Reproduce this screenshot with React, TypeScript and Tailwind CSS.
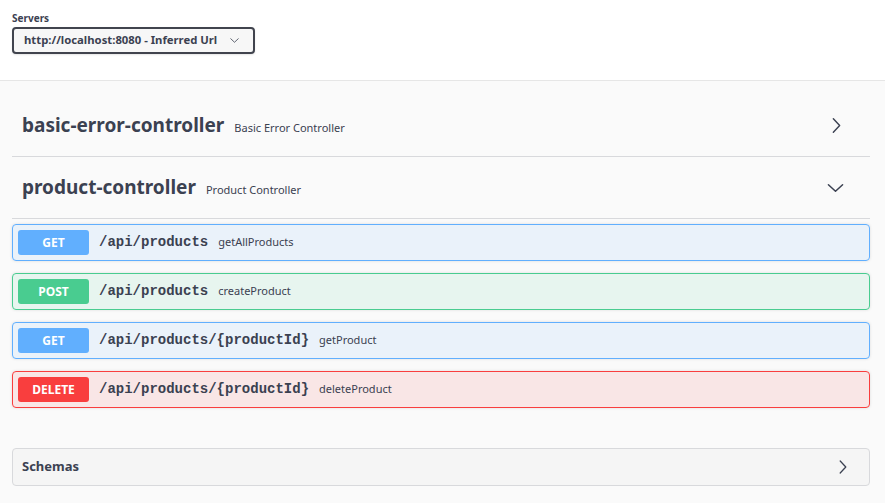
import React from 'react';

type Op = {
  method: 'GET' | 'POST' | 'DELETE';
  path: string;
  summary: string;
};

const ops: Op[] = [
  { method: 'GET', path: '/api/products', summary: 'getAllProducts' },
  { method: 'POST', path: '/api/products', summary: 'createProduct' },
  { method: 'GET', path: '/api/products/{productId}', summary: 'getProduct' },
  { method: 'DELETE', path: '/api/products/{productId}', summary: 'deleteProduct' },
];

const methodStyles: Record<Op['method'], { box: string; badge: string }> = {
  GET: { box: 'border-[#61affe] bg-[#61affe1a]', badge: 'bg-[#61affe]' },
  POST: { box: 'border-[#49cc90] bg-[#49cc901a]', badge: 'bg-[#49cc90]' },
  DELETE: { box: 'border-[#f93e3e] bg-[#f93e3e1a]', badge: 'bg-[#f93e3e]' },
};

const ChevronRight = ({ className = '' }: { className?: string }) => (
  <svg viewBox="0 0 10 18" className={className} fill="none">
    <polyline points="1.5,1.5 8.5,9 1.5,16.5" stroke="#3b4151" strokeWidth="1.6" strokeLinecap="round" strokeLinejoin="round" />
  </svg>
);

const ChevronDown = ({ className = '' }: { className?: string }) => (
  <svg viewBox="0 0 18 10" className={className} fill="none">
    <polyline points="1.5,1.5 9,8.5 16.5,1.5" stroke="#3b4151" strokeWidth="1.6" strokeLinecap="round" strokeLinejoin="round" />
  </svg>
);

const TagRow = ({ name, desc, open }: { name: string; desc: string; open?: boolean }) => (
  <div className="flex items-center h-[57px] pl-[10px] pr-[26px] pb-[5px] border-b border-[#d8d9dc] mb-[5px]">
    <span className="text-[19px] font-bold text-[#3b4151] leading-none">{name}</span>
    <span className="ml-[10px] text-[11px] text-[#3b4151] leading-none pt-[3px]">{desc}</span>
    <div className="ml-auto flex items-center">
      {open ? <ChevronDown className="w-[17px] h-[10px]" /> : <ChevronRight className="w-[9px] h-[17px] mr-[3px]" />}
    </div>
  </div>
);

export default function App() {
  return (
    <div className="w-[885px] h-[503px] overflow-hidden bg-[#fafafa] font-['Noto_Sans',sans-serif] text-[#3b4151]">
      {/* servers */}
      <div className="h-[81px] bg-white border-b border-[#e6e6e6] pl-3 pt-[11px]">
        <div className="text-[10px] font-bold leading-[14px]">Servers</div>
        <div className="mt-[2px] w-[243px] h-[27px] rounded-[4px] border-2 border-[#41444e] bg-[#f7f7f7] flex items-center pl-[10px] pr-[14px] shadow-[0_1px_2px_rgba(0,0,0,0.1)]">
          <span className="text-[11.3px] font-bold">http://localhost:8080 - Inferred Url</span>
          <ChevronDown className="ml-auto w-[9px] h-[5px]" />
        </div>
      </div>

      <div className="pl-3 pr-[15px] pt-[19px]">
        <TagRow name="basic-error-controller" desc="Basic Error Controller" />
        <TagRow name="product-controller" desc="Product Controller" open />

        <div className="flex flex-col gap-3">
          {ops.map((op, i) => (
            <div
              key={i}
              className={`h-[37px] flex items-center border rounded-[4px] pl-[5px] shadow-[0_0_3px_rgba(0,0,0,0.12)] ${methodStyles[op.method].box}`}
            >
              <div
                className={`w-[71px] h-[25px] rounded-[3px] flex items-center justify-center text-white text-[12px] font-bold ${methodStyles[op.method].badge}`}
              >
                {op.method}
              </div>
              <span className="ml-[10px] font-['Liberation_Mono',monospace] font-bold text-[14px] text-[#3b4151]">
                {op.path}
              </span>
              <span className="ml-[10px] text-[11px] text-[#3b4151]">{op.summary}</span>
            </div>
          ))}
        </div>

        <div className="mt-[40px] h-[38px] border border-[#d8d9dc] rounded-[4px] bg-[#f5f5f5] flex items-center pl-[9px] pr-[22px]">
          <span className="text-[13px] font-bold">Schemas</span>
          <ChevronRight className="ml-auto w-[8px] h-[16px]" />
        </div>
      </div>
    </div>
  );
}
